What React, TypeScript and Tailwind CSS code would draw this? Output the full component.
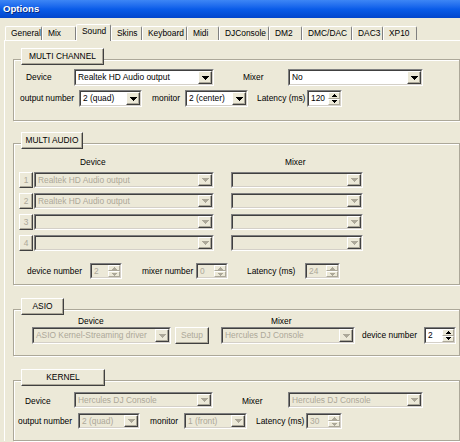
import React from "react";

const DIS = "#aca899";

function DownArrow({ disabled }: { disabled?: boolean }) {
  return (
    <svg width="7" height="4" viewBox="0 0 7 4" shapeRendering="crispEdges">
      <path d="M0 0h7v1H0zM1 1h5v1H1zM2 2h3v1H2zM3 3h1v1H3z" fill={disabled ? DIS : "#000"} />
    </svg>
  );
}

function SmallArrow({ up, disabled }: { up?: boolean; disabled?: boolean }) {
  return (
    <svg width="5" height="3" viewBox="0 0 5 3" shapeRendering="crispEdges">
      <path
        d={up ? "M2 0h1v1H2zM1 1h3v1H1zM0 2h5v1H0z" : "M0 0h5v1H0zM1 1h3v1H1zM2 2h1v1H2z"}
        fill={disabled ? DIS : "#000"}
      />
    </svg>
  );
}

function Combo({ className, text, disabled }: { className: string; text?: string; disabled?: boolean }) {
  return (
    <div className={`${className} shrink-0 flex border border-t-[#808080] border-l-[#808080] border-b-white border-r-white`}>
      <div
        className={`flex-1 flex min-w-0 border border-t-[#404040] border-l-[#404040] border-b-[#d4d0c8] border-r-[#d4d0c8] ${
          disabled ? "bg-[#ece9d8] text-[#aca899]" : "bg-white text-black"
        }`}
      >
        <span className="flex-1 min-w-0 pl-[2px] flex items-center leading-none whitespace-nowrap overflow-hidden">{text}</span>
        <div className="w-[14px] shrink-0 bg-[#ece9d8] flex items-center justify-center border border-t-white border-l-white border-b-[#404040] border-r-[#404040] shadow-[inset_-1px_-1px_0_#aca899]">
          <DownArrow disabled={disabled} />
        </div>
      </div>
    </div>
  );
}

function Spin({ className, value, disabled }: { className: string; value: string; disabled?: boolean }) {
  return (
    <div className={`${className} shrink-0 flex border border-t-[#808080] border-l-[#808080] border-b-white border-r-white`}>
      <div
        className={`flex-1 flex border border-t-[#404040] border-l-[#404040] border-b-[#d4d0c8] border-r-[#d4d0c8] ${
          disabled ? "bg-[#ece9d8] text-[#aca899]" : "bg-white text-black"
        }`}
      >
        <span className="flex-1 pl-[2px] flex items-center leading-none">{value}</span>
        <div className="w-[12px] shrink-0 flex flex-col">
          <div className="flex-1 bg-[#ece9d8] flex items-center justify-center border border-t-white border-l-white border-b-[#aca899] border-r-[#aca899]">
            <SmallArrow up disabled={disabled} />
          </div>
          <div className="flex-1 bg-[#ece9d8] flex items-center justify-center border border-t-white border-l-white border-b-[#aca899] border-r-[#aca899]">
            <SmallArrow disabled={disabled} />
          </div>
        </div>
      </div>
    </div>
  );
}

function RaisedButton({ className, children, disabled }: { className: string; children: React.ReactNode; disabled?: boolean }) {
  return (
    <div
      className={`${className} shrink-0 relative bg-[#ece9d8] flex items-center justify-center leading-none border border-t-white border-l-white border-b-[#404040] border-r-[#404040] shadow-[inset_-1px_-1px_0_#aca899] ${
        disabled ? "text-[#aca899]" : "text-black"
      }`}
    >
      {children}
    </div>
  );
}

function Label({ className, children }: { className: string; children: React.ReactNode }) {
  return <span className={`${className} shrink-0 flex items-center whitespace-nowrap leading-none`}>{children}</span>;
}

function Group({ title, titleW, top, className, children }: { title: string; titleW: string; top: string; className: string; children: React.ReactNode }) {
  return (
    <div className={`${top} flex flex-col`}>
      <RaisedButton className={`${titleW} h-[17px] ml-[8px] z-10`}>{title}</RaisedButton>
      <div className={`${className} mt-[-6px] w-[447px] border border-[#aca899] shadow-[inset_1px_1px_0_#fff,1px_1px_0_#fff] flex flex-col`}>
        {children}
      </div>
    </div>
  );
}

const tabs = [
  { name: "General", w: "w-[37px]" },
  { name: "Mix", w: "w-[34px]" },
  { name: "Sound", w: "w-[35px]", active: true },
  { name: "Skins", w: "w-[31px]" },
  { name: "Keyboard", w: "w-[45px]" },
  { name: "Midi", w: "w-[32px]" },
  { name: "DJConsole", w: "w-[50px]" },
  { name: "DM2", w: "w-[33px]" },
  { name: "DMC/DAC", w: "w-[50px]" },
  { name: "DAC3", w: "w-[31px]" },
  { name: "XP10", w: "w-[34px]" },
];

export default function App() {
  return (
    <div className="w-[460px] h-[442px] overflow-hidden bg-[#ece9d8] text-black text-[8.4px] font-['Liberation_Sans',Arial,sans-serif]">
      {/* Title bar */}
      <div className="h-[18px] pl-[3px] flex items-center bg-gradient-to-b from-[#3d86f5] via-[#0a5ce9] to-[#0346cc] text-white font-bold text-[9.6px] [text-shadow:1px_1px_0_#0a2a80]">
        Options
      </div>

      {/* Tabs */}
      <div className="h-[22px] pl-[5px] flex items-end">
        {tabs.map((t) =>
          t.active ? (
            <div
              key={t.name}
              className={`${t.w} h-[17px] mb-[-1px] relative z-10 bg-[#ece9d8] pl-[5px] pb-[3px] flex items-center leading-none border-t border-l border-r border-t-white border-l-white border-r-[#808080] rounded-t-[2px]`}
            >
              {t.name}
            </div>
          ) : (
            <div
              key={t.name}
              className={`${t.w} h-[14px] pl-[5px] flex items-center leading-none border-t border-l border-r border-t-white border-l-white border-r-[#808080] rounded-t-[2px]`}
            >
              {t.name}
            </div>
          )
        )}
      </div>

      {/* Panel */}
      <div className="ml-[4px] border-t border-l border-t-white border-l-white pt-[7px] pl-[8px] flex flex-col">
        {/* MULTI CHANNEL */}
        <Group title="MULTI CHANNEL" titleW="w-[83px]" top="" className="h-[62px] pt-[9px]">
          <div className="h-[17px] flex">
            <Label className="w-[60px] pl-[12px]">Device</Label>
            <Combo className="w-[140px]" text="Realtek HD Audio output" />
            <Label className="w-[74px] pl-[29px]">Mixer</Label>
            <Combo className="w-[135px]" text="No" />
          </div>
          <div className="h-[17px] mt-[4px] flex">
            <Label className="w-[65px] pl-[6px]">output number</Label>
            <Combo className="w-[63px]" text="2 (quad)" />
            <Label className="w-[43px] pl-[10px]">monitor</Label>
            <Combo className="w-[63px]" text="2 (center)" />
            <Label className="w-[59px] pl-[9px]">Latency (ms)</Label>
            <Spin className="w-[35px]" value="120" />
          </div>
        </Group>

        {/* MULTI AUDIO */}
        <Group title="MULTI AUDIO" titleW="w-[62px]" top="mt-[11px]" className="h-[142px] pt-[13px]">
          <div className="h-[10px] flex">
            <Label className="w-[271px] pl-[66px]">Device</Label>
            <Label className="">Mixer</Label>
          </div>
          <div className="mt-[5px] flex flex-col gap-[5px]">
            {["1", "2", "3", "4"].map((n, i) => (
              <div key={n} className="h-[16px] flex pl-[5px]">
                <RaisedButton className="w-[14px]" disabled>
                  {n}
                </RaisedButton>
                <Combo className="w-[180px] ml-[1px]" text={i < 2 ? "Realtek HD Audio output" : ""} disabled />
                <Combo className="w-[132px] ml-[17px]" disabled />
              </div>
            ))}
          </div>
          <div className="h-[16px] mt-[12px] flex">
            <Label className="w-[76px] pl-[13px]">device number</Label>
            <Spin className="w-[32px]" value="2" disabled />
            <Label className="w-[74px] pl-[20px]">mixer number</Label>
            <Spin className="w-[32px]" value="0" disabled />
            <Label className="w-[77px] pl-[19px]">Latency (ms)</Label>
            <Spin className="w-[35px]" value="24" disabled />
          </div>
        </Group>

        {/* ASIO */}
        <Group title="ASIO" titleW="w-[43px]" top="mt-[13px]" className="h-[47px] pt-[6px]">
          <div className="h-[10px] flex">
            <Label className="w-[257px] pl-[64px]">Device</Label>
            <Label className="">Mixer</Label>
          </div>
          <div className="h-[17px] mt-[1px] flex">
            <span className="w-[18px] shrink-0" />
            <Combo className="w-[139px]" text="ASIO Kernel-Streaming driver" disabled />
            <RaisedButton className="w-[34px] ml-[4px]" disabled>
              Setup
            </RaisedButton>
            <Combo className="w-[134px] ml-[12px]" text="Hercules DJ Console" disabled />
            <Label className="w-[69px] pl-[7px]">device number</Label>
            <Spin className="w-[32px]" value="2" />
          </div>
        </Group>

        {/* KERNEL */}
        <Group title="KERNEL" titleW="w-[84px]" top="mt-[13px]" className="h-[61px] pt-[11px]">
          <div className="h-[16px] flex">
            <Label className="w-[60px] pl-[11px] pt-[3px]">Device</Label>
            <Combo className="w-[139px]" text="Hercules DJ Console" disabled />
            <Label className="w-[75px] pl-[29px] pt-[3px]">Mixer</Label>
            <Combo className="w-[135px]" text="Hercules DJ Console" disabled />
          </div>
          <div className="h-[16px] mt-[5px] flex">
            <Label className="w-[64px] pl-[4px]">output number</Label>
            <Combo className="w-[62px]" text="2 (quad)" disabled />
            <Label className="w-[44px] pl-[10px]">monitor</Label>
            <Combo className="w-[63px]" text="1 (front)" disabled />
            <Label className="w-[59px] pl-[9px]">Latency (ms)</Label>
            <Spin className="w-[36px]" value="30" disabled />
          </div>
        </Group>
      </div>
    </div>
  );
}
